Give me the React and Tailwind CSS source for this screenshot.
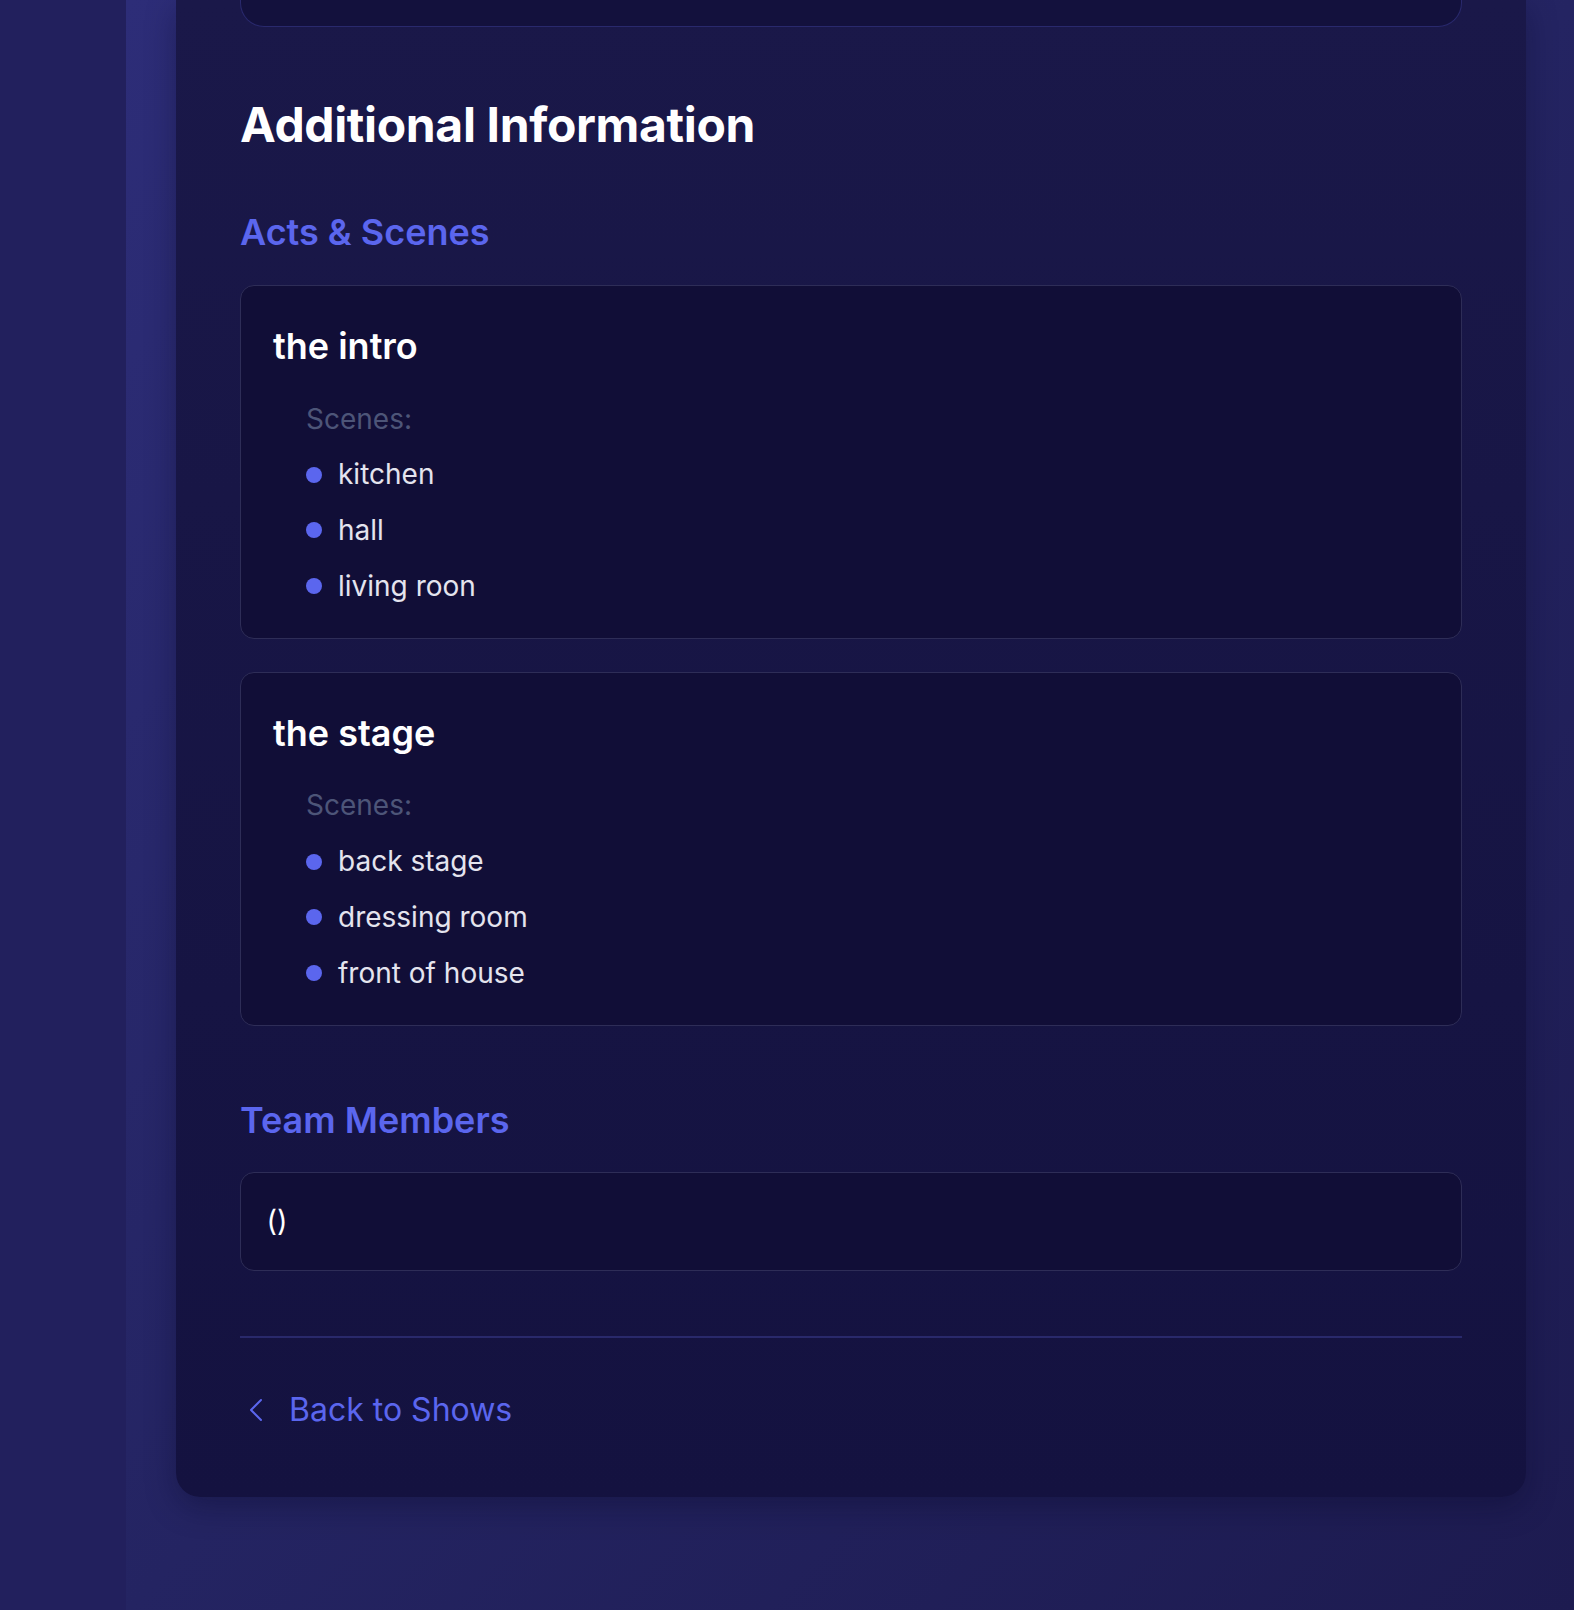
const acts = [
  { title: "the intro", scenes: ["kitchen", "hall", "living roon"] },
  { title: "the stage", scenes: ["back stage", "dressing room", "front of house"] },
];

function ActCard({ act }) {
  return (
    <div className="rounded-[14px] border border-[#2e2d57] bg-[#110e37] px-[32px] pt-[32px] pb-[29.5px]">
      <h4 className="text-[36px] leading-[56px] font-semibold text-white">{act.title}</h4>
      <ul className="mt-[22.5px] ml-[33px] flex flex-col gap-[10.9px] text-[28px] leading-[44.8px]">
        <li className="text-[#4d5578]">Scenes:</li>
        {act.scenes.map((scene) => (
          <li key={scene} className="flex items-center gap-[16px] text-[#e4e4ee]">
            <span className="h-[16px] w-[16px] shrink-0 rounded-full bg-[#5b66ee]" />
            {scene}
          </li>
        ))}
      </ul>
    </div>
  );
}

export default function App() {
  return (
    <div
      className="flex min-h-[1610px] bg-[#23215f]"
      style={{ fontFamily: "Inter, 'Noto Sans', sans-serif" }}
    >
      <aside className="w-[126px] shrink-0 bg-[#22205d]" />
      <main className="flex-1 bg-linear-to-br from-[#2d2d78] via-[#242462] to-[#1d1b50] pl-[50px] pr-[48px] pb-[112px]">
        <section className="rounded-b-[24px] bg-linear-to-b from-[#1a1849] to-[#141240] px-[64px] pb-[65px] shadow-[0_10px_30px_rgba(10,8,40,0.35)]">
          <div className="h-[27px] rounded-b-[24px] border-x border-b border-[#29296d] bg-[#13113d]" />

          <h2 className="mt-[68.5px] text-[48px] leading-[57.6px] font-bold tracking-[-0.35px] text-white">
            Additional Information
          </h2>

          <h3 className="mt-[55px] text-[36px] leading-[48px] font-semibold text-[#5b66ee]">Acts &amp; Scenes</h3>
          <div className="mt-[29px] flex flex-col gap-[33px]">
            {acts.map((act) => (
              <ActCard key={act.title} act={act} />
            ))}
          </div>

          <h3 className="mt-[70.5px] text-[36px] leading-[48px] font-semibold text-[#5b66ee]">Team Members</h3>
          <div className="mt-[27.5px] rounded-[14px] border border-[#2e2d57] bg-[#110e37] px-[25.6px] py-[26.2px] text-[28.8px] leading-[44.8px] text-white">
            ()
          </div>

          <div className="mt-[65px] border-t-2 border-[#29296b] pt-[49.7px]">
            <a href="#" className="flex items-center gap-[17px] text-[32px] leading-[44.8px] text-[#5b66ee]">
              <svg width="32" height="32" viewBox="0 0 24 24" fill="none" stroke="currentColor" strokeWidth="1.5" strokeLinecap="round" strokeLinejoin="round">
                <path d="M15.75 19.5 8.25 12l7.5-7.5" />
              </svg>
              Back to Shows
            </a>
          </div>
        </section>
      </main>
    </div>
  );
}
